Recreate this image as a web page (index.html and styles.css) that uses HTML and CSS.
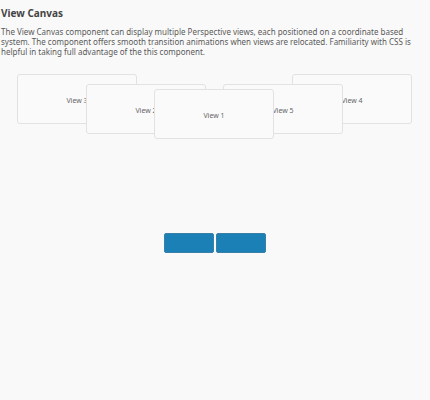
FILE: index.html
```html
<!DOCTYPE html>
<html>
<head>
<meta charset="utf-8">
<link rel="stylesheet" href="styles.css">
</head>
<body>
<div class="page">
  <h1 class="title">View Canvas</h1>
  <p class="desc">The View Canvas component can display multiple Perspective views, each positioned on a coordinate based system. The component offers smooth transition animations when views are relocated. Familiarity with CSS is helpful in taking full advantage of the this component.</p>
  <div class="canvas">
    <div class="view" style="left:17px;top:8px;">View 3</div>
    <div class="view" style="left:292px;top:8px;">View 4</div>
    <div class="view" style="left:86px;top:18px;">View 2</div>
    <div class="view" style="left:223px;top:18px;">View 5</div>
    <div class="view" style="left:154px;top:23px;">View 1</div>
  </div>
  <div class="buttons">
    <button class="btn"></button>
    <button class="btn"></button>
  </div>
</div>
</body>
</html>
```
FILE: styles.css
```css
html, body {
  margin: 0;
  padding: 0;
  background: #f9f9f9;
  width: 430px;
  height: 400px;
  overflow: hidden;
}
.page {
  font-family: "Noto Sans", "Open Sans", sans-serif;
  color: #555;
  padding: 0 1px;
}
.title {
  margin: 0;
  padding-top: 6px;
  font-size: 10px;
  line-height: 14px;
  font-weight: 700;
  color: #444;
}
.desc {
  margin: 7px 0 0;
  font-size: 8px;
  line-height: 10px;
  color: #5a5a5a;
  width: 416px;
}
.canvas {
  position: relative;
  height: 167px;
  margin: 9px -1px 0;
}
.view {
  position: absolute;
  box-sizing: border-box;
  width: 120px;
  height: 50px;
  padding-top: 2px;
  background: #fafafa;
  border: 1px solid #e2e2e2;
  border-radius: 3px;
  display: flex;
  align-items: center;
  justify-content: center;
  font-size: 7px;
  color: #666;
}
.buttons {
  display: flex;
  justify-content: center;
  gap: 2px;
  margin-left: -1px;
}
.btn {
  width: 50px;
  height: 20px;
  box-sizing: border-box;
  background: #1b80b6;
  border: 1px solid #3a7fa8;
  border-radius: 2px;
  padding: 0;
}
```
